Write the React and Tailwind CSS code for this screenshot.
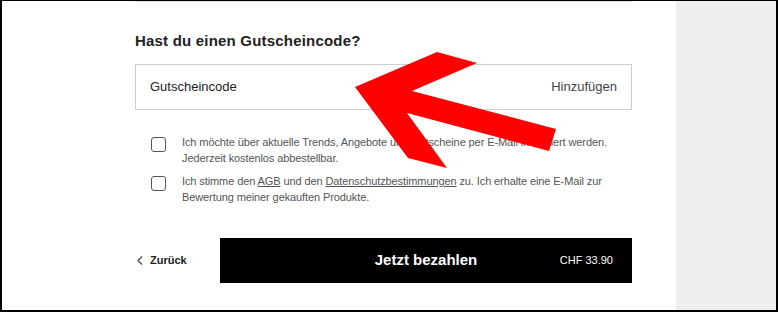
import React from 'react';

const Checkbox = () => (
    <span className="mt-[3px] ml-4 h-[15px] w-[15px] shrink-0 rounded-[3px] border-[1.5px] border-[#555] bg-white"></span>
);

const ConsentRow = ({ children }) => (
    <label className="flex items-start gap-4">
        <Checkbox />
        <span className="text-[11px] leading-4 tracking-[-0.1px] text-[#555]">{children}</span>
    </label>
);

const Arrow = () => (
    <svg
        className="pointer-events-none absolute left-[-2px] top-[-1px]"
        width="778"
        height="312"
        viewBox="0 0 778 312"
    >
        <polygon
            fill="#ff0000"
            points="355,87 437,52 477,63 412,91 556,129 549,151 407,113 447,168 408,158"
        />
    </svg>
);

export default function App() {
    return (
        <div className="relative flex h-[312px] w-[778px] border-x-2 border-t border-b-2 border-black bg-white font-['Liberation_Sans',Arial,sans-serif]">
            <div className="flex-1">
                <div className="ml-[133px] flex w-[497px] flex-col">
                    <div className="h-px bg-[#ddd]"></div>

                    <h2 className="mt-[30px] text-[15px] font-bold leading-[18px] tracking-[0.2px] text-[#222]">
                        Hast du einen Gutscheincode?
                    </h2>

                    <div className="mt-[14px] flex h-[46px] items-center justify-between border border-[#ccc] px-[14px] text-[13px]">
                        <span className="text-[#222]">Gutscheincode</span>
                        <button type="button" className="text-[#444]">Hinzufügen</button>
                    </div>

                    <div className="mt-6 flex flex-col gap-[7px]">
                        <ConsentRow>
                            Ich möchte über aktuelle Trends, Angebote und Gutscheine per E-Mail informiert werden.
                            <br />
                            Jederzeit kostenlos abbestellbar.
                        </ConsentRow>
                        <ConsentRow>
                            Ich stimme den <a href="#" className="underline">AGB</a> und den{' '}
                            <a href="#" className="underline">Datenschutzbestimmungen</a> zu. Ich erhalte eine E-Mail zur
                            <br />
                            Bewertung meiner gekauften Produkte.
                        </ConsentRow>
                    </div>

                    <div className="mt-[33px] flex items-center">
                        <button type="button" className="flex w-[85px] items-center gap-[7px] pl-[2px] text-[11px] font-bold text-[#222]">
                            <svg width="6" height="9" viewBox="0 0 6 9" fill="none" stroke="#444" strokeWidth="1.2">
                                <path d="M5 0.5 1 4.5 5 8.5" />
                            </svg>
                            Zurück
                        </button>
                        <button type="button" className="relative flex h-[45px] flex-1 items-center justify-center bg-black text-white">
                            <span className="text-[15px] font-bold">Jetzt bezahlen</span>
                            <span className="absolute right-[19px] text-[11px]">CHF 33.90</span>
                        </button>
                    </div>
                </div>
            </div>
            <div className="w-[100px] bg-[#eeeeee]"></div>
            <Arrow />
        </div>
    );
}
